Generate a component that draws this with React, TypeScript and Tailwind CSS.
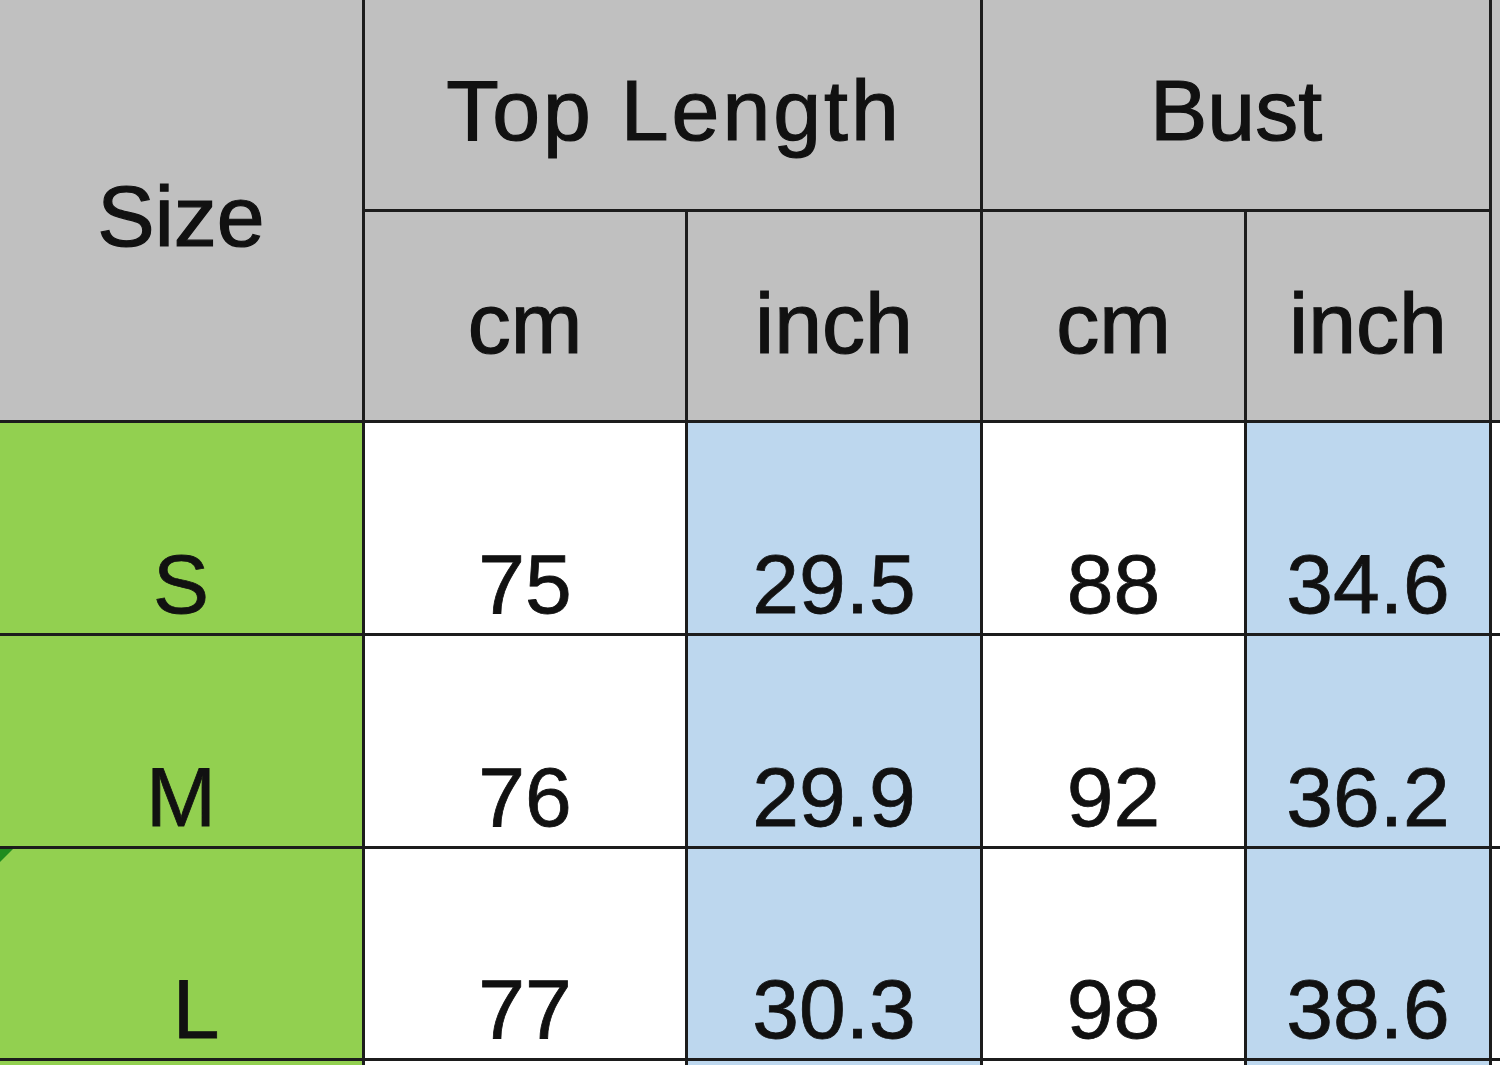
import React from 'react';

const rows = [
  { size: 'S', lenCm: '75', lenIn: '29.5', bustCm: '88', bustIn: '34.6' },
  { size: 'M', lenCm: '76', lenIn: '29.9', bustCm: '92', bustIn: '36.2' },
  { size: 'L', lenCm: '77', lenIn: '30.3', bustCm: '98', bustIn: '38.6' },
];

const head = 'bg-[#c0c0c0] flex items-center justify-center leading-none text-[86px] [-webkit-text-stroke:1.2px_#111]';
const cell = 'flex items-end justify-center leading-none text-[84px] pb-[7px] [-webkit-text-stroke:0.8px_#111]';

export default function App() {
  return (
    <div className="w-[1500px] h-[1065px] overflow-hidden bg-white text-[#111] font-['Liberation_Sans',Arial,sans-serif]">
      <div className="grid grid-cols-[362px_320px_292px_261px_242px_1fr] grid-rows-[209px_208px_210px_210px_209px_40px] gap-[3px] bg-[#1c1c1c] w-[1503px]">
        {/* header */}
        <div className={`${head} row-span-2 pt-[12px]`}>Size</div>
        <div className={`${head} col-span-2 pt-[10px] tracking-[3px] pl-[3px]`}>Top Length</div>
        <div className={`${head} col-span-2 pt-[10px]`}>Bust</div>
        <div className="bg-[#c0c0c0] row-span-2" />
        <div className={`${head} pt-[14px]`}>cm</div>
        <div className={`${head} pt-[14px]`}>inch</div>
        <div className={`${head} pt-[14px]`}>cm</div>
        <div className={`${head} pt-[14px]`}>inch</div>

        {/* data rows */}
        {rows.map((r) => (
          <React.Fragment key={r.size}>
            <div className={`${cell} bg-[#92d050] relative ${r.size === 'L' ? 'pl-[30px]' : ''}`}>
              {r.size === 'L' && (
                <span className="absolute left-0 top-0 w-0 h-0 border-t-[13px] border-t-[#1e8c1e] border-r-[13px] border-r-transparent" />
              )}
              {r.size}
            </div>
            <div className={`${cell} bg-white`}>{r.lenCm}</div>
            <div className={`${cell} bg-[#bdd7ee]`}>{r.lenIn}</div>
            <div className={`${cell} bg-white`}>{r.bustCm}</div>
            <div className={`${cell} bg-[#bdd7ee]`}>{r.bustIn}</div>
            <div className="bg-white" />
          </React.Fragment>
        ))}

        {/* next row, cut off */}
        <div className="bg-[#92d050]" />
        <div className="bg-white" />
        <div className="bg-[#bdd7ee]" />
        <div className="bg-white" />
        <div className="bg-[#bdd7ee]" />
        <div className="bg-white" />
      </div>
    </div>
  );
}
